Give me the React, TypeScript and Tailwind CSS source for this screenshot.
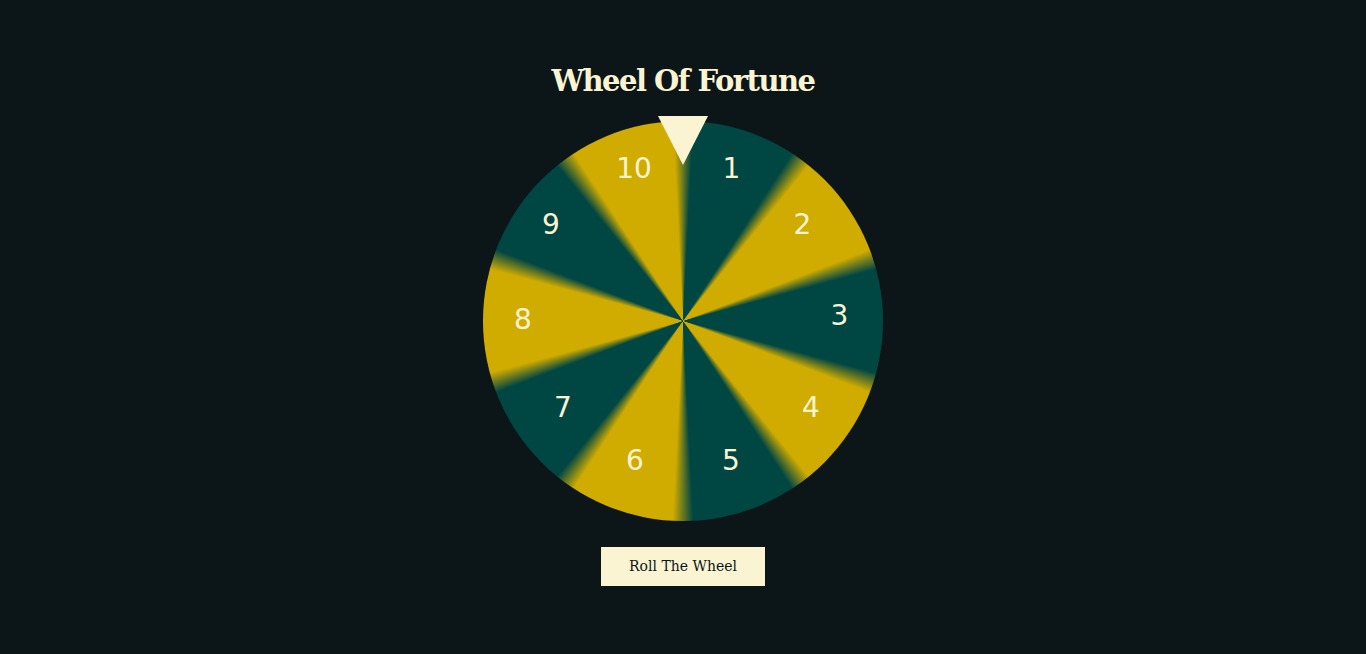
const numbers: Array<{ n: number; x: number; y: number }> = [
    { n: 1, x: 248.5, y: 47.5 },
    { n: 2, x: 319.5, y: 103.5 },
    { n: 3, x: 356.5, y: 195 },
    { n: 4, x: 328, y: 286.5 },
    { n: 5, x: 248, y: 340 },
    { n: 6, x: 152, y: 340 },
    { n: 7, x: 80, y: 286.5 },
    { n: 8, x: 40, y: 199 },
    { n: 9, x: 68, y: 103.5 },
    { n: 10, x: 151, y: 47.5 }
]

const wheelBg =
    'conic-gradient(from 0deg, #d1ac00 -3deg, #004643 3deg, #004643 33deg, #d1ac00 39deg, #d1ac00 69deg, #004643 75deg, #004643 105deg, #d1ac00 111deg, #d1ac00 141deg, #004643 147deg, #004643 177deg, #d1ac00 183deg, #d1ac00 213deg, #004643 219deg, #004643 249deg, #d1ac00 255deg, #d1ac00 285deg, #004643 291deg, #004643 321deg, #d1ac00 327deg, #d1ac00 357deg, #004643 363deg)'

export default function App() {
    return (
        <div className="min-h-screen bg-[#0c1618] flex flex-col items-center pt-[60px]">
            <h1 className="text-[#faf4d3] text-[29px] leading-[42px] font-bold font-['DejaVu_Serif',serif] tracking-[-1.5px]">
                Wheel Of Fortune
            </h1>
            <div className="relative mt-[19px]">
                <div className="w-[400px] h-[400px] rounded-full relative" style={{ background: wheelBg }}>
                    {numbers.map(({ n, x, y }) => (
                        <span
                            key={n}
                            className="absolute -translate-x-1/2 -translate-y-1/2 leading-none text-[#faf4d3] text-[28px] font-['DejaVu_Sans',sans-serif]"
                            style={{ left: x, top: y }}
                        >
                            {n}
                        </span>
                    ))}
                </div>
                <svg className="absolute left-1/2 -translate-x-1/2 top-[-5px]" width="50" height="50" viewBox="0 0 50 50">
                    <polygon points="0,0 50,0 25,49" fill="#faf4d3" />
                </svg>
            </div>
            <button className="mt-[26px] w-[164px] h-[39px] bg-[#faf4d3] text-[#0c1618] text-[14px] font-['DejaVu_Serif',serif]">
                Roll The Wheel
            </button>
        </div>
    )
}
